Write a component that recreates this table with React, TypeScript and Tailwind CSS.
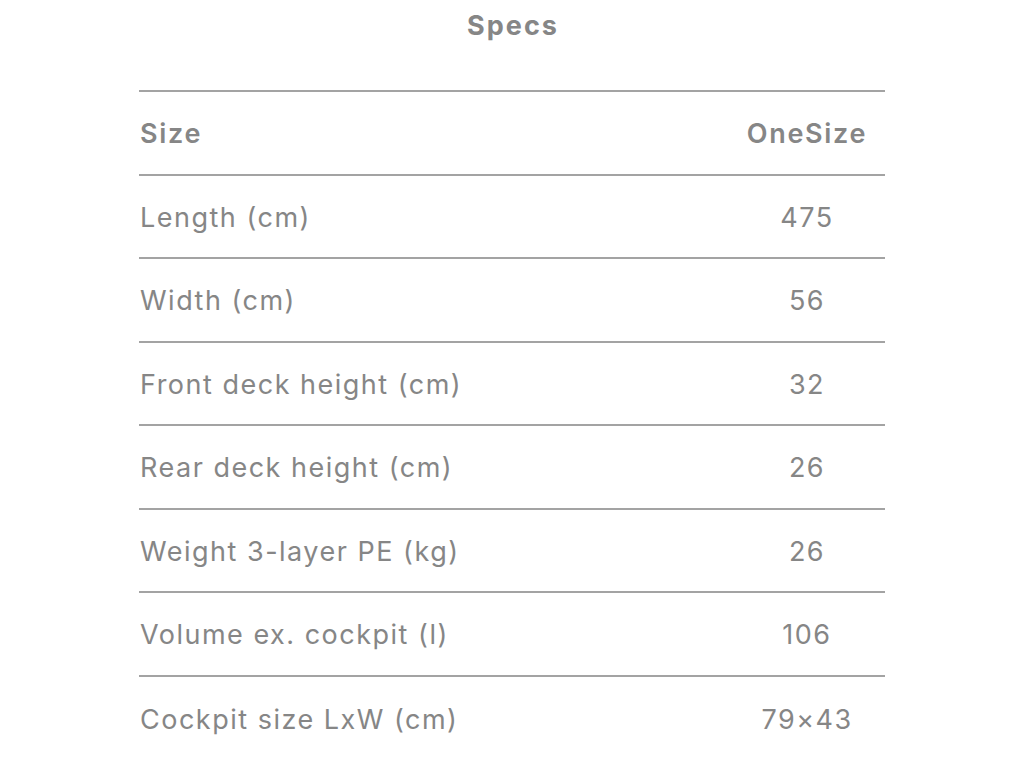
import React from "react";

const rows: [string, string][] = [
  ["Length (cm)", "475"],
  ["Width (cm)", "56"],
  ["Front deck height (cm)", "32"],
  ["Rear deck height (cm)", "26"],
  ["Weight 3-layer PE (kg)", "26"],
  ["Volume ex. cockpit (l)", "106"],
  ["Cockpit size LxW (cm)", "79×43"],
];

export default function App() {
  return (
    <div
      className="w-[1024px] h-[768px] bg-white overflow-hidden text-[#868686]"
      style={{ fontFamily: "Inter, 'Liberation Sans', sans-serif" }}
    >
      <h2 className="text-center text-[27px] font-bold leading-[32px] pt-[10px] tracking-[2px] pl-[2px]">Specs</h2>
      <div className="mx-[139px] mt-[48px] border-t-2 border-[#a3a3a3]">
        <div className="grid grid-cols-[1fr_156px] h-[83.5px] pt-[2px] items-center border-b-2 border-[#a3a3a3] text-[27px] font-semibold tracking-[1.7px]">
          <div className="pl-px">Size</div>
          <div className="text-center">OneSize</div>
        </div>
        {rows.map(([k, v], i) => (
          <div
            key={k}
            className={
              "grid grid-cols-[1fr_156px] h-[83.5px] pt-[3px] items-center text-[27px] tracking-[1.5px] " +
              (i < rows.length - 1 ? "border-b-2 border-[#a3a3a3]" : "")
            }
          >
            <div className="pl-px">{k}</div>
            <div className="text-center">{v}</div>
          </div>
        ))}
      </div>
    </div>
  );
}
